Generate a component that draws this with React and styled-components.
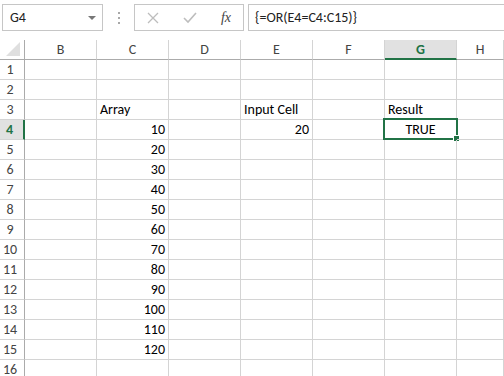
import styled, { createGlobalStyle } from "styled-components";

const GlobalStyle = createGlobalStyle`
  body {
    margin: 0;
    background: #fff;
    font-family: Carlito, Calibri, "Open Sans", "Liberation Sans", sans-serif;
    color: #000;
  }
`;

const FormulaBar = styled.div`
  display: flex;
  align-items: flex-start;
  height: 40px;
  padding: 4px 0 0 2px;
  box-sizing: border-box;
`;

const NameBox = styled.div`
  width: 101px;
  height: 27px;
  box-sizing: border-box;
  border: 1px solid #c6c6c6;
  display: flex;
  align-items: center;
  justify-content: space-between;
  padding: 0 6px 0 7px;
  font-size: 14px;
  color: #222;
`;

const Caret = styled.span`
  width: 0;
  height: 0;
  border-left: 4px solid transparent;
  border-right: 4px solid transparent;
  border-top: 4px solid #777;
  margin-top: 1px;
`;

const Dots = styled.div`
  width: 31px;
  height: 27px;
  display: flex;
  flex-direction: column;
  align-items: center;
  justify-content: center;
  gap: 3px;

  span {
    width: 2px;
    height: 2px;
    background: #a8a8a8;
  }
`;

const FxBox = styled.div`
  width: 110px;
  height: 27px;
  box-sizing: border-box;
  border: 1px solid #c6c6c6;
  display: flex;
  align-items: center;
  padding: 0 12px 0 12px;
  justify-content: space-between;
`;

const Fx = styled.span`
  font-family: "Liberation Serif", serif;
  font-style: italic;
  font-size: 14px;
  color: #444;
`;

const FormulaInput = styled.div`
  flex: 1;
  margin-left: 4px;
  height: 27px;
  box-sizing: border-box;
  border: 1px solid #c6c6c6;
  border-right: none;
  display: flex;
  align-items: center;
  padding-left: 6px;
  font-size: 14px;
  color: #222;
`;

const Grid = styled.div`
  display: grid;
  grid-template-columns: 25px repeat(6, 72px) 1fr;
  grid-auto-rows: 20px;
  font-size: 14px;
`;

const Cell = styled.div`
  position: relative;
  box-sizing: border-box;
  border-right: 1px solid #d4d4d4;
  border-bottom: 1px solid #d4d4d4;
  display: flex;
  align-items: center;
  justify-content: ${(p) => (p.$right ? "flex-end" : p.$center ? "center" : "flex-start")};
  padding: 0 3px;
  white-space: nowrap;
  overflow: visible;
  line-height: 1;
`;

const ColHead = styled.div`
  box-sizing: border-box;
  border-right: 1px solid #d4d4d4;
  border-bottom: ${(p) => (p.$active ? "2px solid #217346" : "1px solid #ababab")};
  background: ${(p) => (p.$active ? "#e1e1e1" : "#fff")};
  color: ${(p) => (p.$active ? "#217346" : "#444")};
  font-weight: ${(p) => (p.$active ? "bold" : "normal")};
  display: flex;
  align-items: center;
  justify-content: center;
`;

const Corner = styled.div`
  box-sizing: border-box;
  border-right: 1px solid #ababab;
  border-bottom: 1px solid #ababab;
  position: relative;

  &::after {
    content: "";
    position: absolute;
    right: 4px;
    bottom: 3px;
    width: 0;
    height: 0;
    border-left: 14px solid transparent;
    border-bottom: 14px solid #dfdfdf;
  }
`;

const RowHead = styled.div`
  box-sizing: border-box;
  border-right: ${(p) => (p.$active ? "2px solid #217346" : "1px solid #ababab")};
  border-bottom: 1px solid #d4d4d4;
  background: ${(p) => (p.$active ? "#e1e1e1" : "#fff")};
  color: ${(p) => (p.$active ? "#217346" : "#444")};
  font-weight: ${(p) => (p.$active ? "bold" : "normal")};
  display: flex;
  align-items: center;
  justify-content: center;
  padding-right: 4px;
`;

const Selection = styled.div`
  position: absolute;
  left: -2px;
  top: -2px;
  right: -2px;
  bottom: -1px;
  border: 2px solid #217346;
  pointer-events: none;

  &::after {
    content: "";
    position: absolute;
    right: -4px;
    bottom: -4px;
    width: 5px;
    height: 5px;
    background: #217346;
    border: 1px solid #fff;
  }
`;

const cols = ["B", "C", "D", "E", "F", "G", "H"];
const values = { 4: 10, 5: 20, 6: 30, 7: 40, 8: 50, 9: 60, 10: 70, 11: 80, 12: 90, 13: 100, 14: 110, 15: 120 };

function cellContent(row, col) {
  if (row === 3 && col === "C") return { text: "Array" };
  if (row === 3 && col === "E") return { text: "Input Cell" };
  if (row === 3 && col === "G") return { text: "Result" };
  if (row === 4 && col === "E") return { text: "20", right: true };
  if (row === 4 && col === "G") return { text: "TRUE", center: true, selected: true };
  if (col === "C" && values[row]) return { text: String(values[row]), right: true };
  return { text: "" };
}

export default function App() {
  const rows = Array.from({ length: 16 }, (_, i) => i + 1);

  return (
    <>
      <GlobalStyle />
      <FormulaBar>
        <NameBox>
          G4
          <Caret />
        </NameBox>
        <Dots>
          <span />
          <span />
          <span />
        </Dots>
        <FxBox>
          <svg width="12" height="12" viewBox="0 0 12 12">
            <path d="M1 1 L11 11 M11 1 L1 11" stroke="#bdbdbd" strokeWidth="1.3" />
          </svg>
          <svg width="14" height="12" viewBox="0 0 14 12">
            <path d="M1 6 L5 10 L13 1" stroke="#bdbdbd" strokeWidth="1.6" fill="none" />
          </svg>
          <Fx>fx</Fx>
        </FxBox>
        <FormulaInput>{"{=OR(E4=C4:C15)}"}</FormulaInput>
      </FormulaBar>

      <Grid>
        <Corner />
        {cols.map((c) => (
          <ColHead key={c} $active={c === "G"}>
            {c}
          </ColHead>
        ))}
        {rows.map((r) => (
          <Row key={r} r={r} />
        ))}
      </Grid>
    </>
  );
}

function Row({ r }) {
  return (
    <>
      <RowHead $active={r === 4}>{r}</RowHead>
      {cols.map((c) => {
        const cell = cellContent(r, c);
        return (
          <Cell key={c} $right={cell.right} $center={cell.center}>
            {cell.text}
            {cell.selected && <Selection />}
          </Cell>
        );
      })}
    </>
  );
}
